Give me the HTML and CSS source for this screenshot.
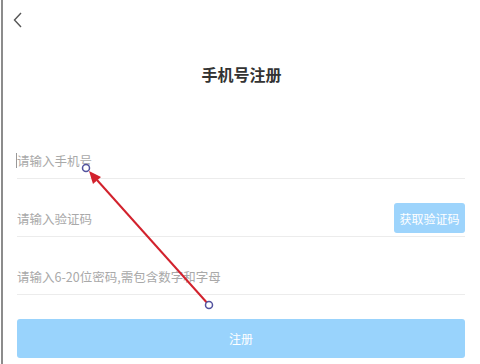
FILE: index.html
```html
<!DOCTYPE html>
<html lang="zh-CN">
<head>
    <meta charset="UTF-8">
    <meta name="viewport" content="width=device-width, initial-scale=1.0">
    <title>手机号注册</title>
    <link rel="stylesheet" href="styles.css">
</head>
<body>
    <div class="screen">
        <div class="header">
            <button class="back" aria-label="返回">
                <svg width="10" height="16" viewBox="0 0 10 16">
                    <path d="M8 1 L1.5 8 L8 15" fill="none" stroke="#555" stroke-width="1.4"/>
                </svg>
            </button>
        </div>
        <h1 class="title">手机号注册</h1>
        <form class="form" onsubmit="return false">
            <div class="field">
                <span class="caret"></span>
                <input type="tel" placeholder="请输入手机号">
            </div>
            <div class="field">
                <input type="text" placeholder="请输入验证码">
                <button class="code-btn" type="button">获取验证码</button>
            </div>
            <div class="field">
                <input type="password" placeholder="请输入6-20位密码,需包含数字和字母">
            </div>
            <button class="submit" type="submit">注册</button>
        </form>

        <!-- annotation arrow drawn over the form -->
        <svg class="annotation" width="480" height="364" viewBox="0 0 480 364">
            <line x1="209" y1="305" x2="97" y2="180" stroke="#d2222d" stroke-width="2"/>
            <polygon points="89,171 101,177 93,184" fill="#d2222d"/>
            <circle cx="86" cy="168" r="3.5" fill="#fff" stroke="#52529e" stroke-width="1.5"/>
            <circle cx="209" cy="305" r="3.5" fill="#fff" stroke="#52529e" stroke-width="1.5"/>
        </svg>
    </div>
</body>
</html>
```

FILE: styles.css
```css
html, body {
    margin: 0;
    padding: 0;
    background: #fff;
}
body {
    font-family: "Noto Sans CJK SC", "Noto Sans", sans-serif;
    width: 480px;
    height: 364px;
    overflow: hidden;
}
.screen {
    position: relative;
    margin-left: 1px;
    height: 364px;
    border-left: 2px solid #8c8c8c;
    box-sizing: border-box;
}
.header {
    height: 40px;
    display: flex;
    align-items: center;
    padding-left: 10px;
}
.back {
    border: none;
    background: none;
    padding: 0;
    display: flex;
    cursor: pointer;
}
.title {
    margin: 22px 0 0;
    text-align: center;
    font-size: 16px;
    line-height: 24px;
    font-weight: bold;
    color: #333;
}
.form {
    padding: 0 15px 0 14px;
    margin-top: 56px;
}
.field {
    display: flex;
    align-items: center;
    height: 36px;
    border-bottom: 1px solid #ececec;
    margin-bottom: 21px;
}
.field input {
    flex: 1;
    border: none;
    outline: none;
    background: transparent;
    padding: 0;
    font-family: inherit;
    font-size: 12.5px;
    color: #333;
}
.field input::placeholder {
    color: #a9a9a9;
}
.caret {
    width: 1px;
    height: 15px;
    background: #999;
    margin-left: -1px;
}
.code-btn {
    height: 30px;
    width: 71px;
    border: none;
    border-radius: 3px;
    background: #9dd4fc;
    color: #fff;
    font-family: inherit;
    font-size: 12px;
    padding: 0;
}
.submit {
    display: block;
    width: 100%;
    height: 39px;
    margin-top: 24px;
    border: none;
    border-radius: 3px;
    background: #99d3fc;
    color: #fff;
    font-family: inherit;
    font-size: 12px;
}
.annotation {
    position: absolute;
    left: -3px;
    top: 0;
    pointer-events: none;
}
```
